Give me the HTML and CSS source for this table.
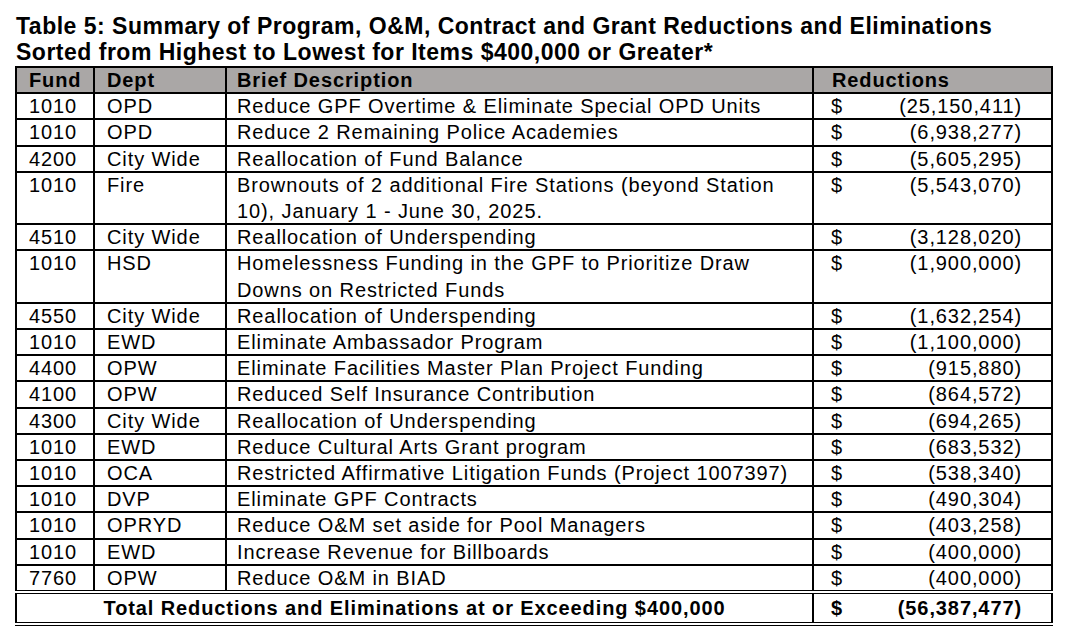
FILE: index.html
```html
<!DOCTYPE html>
<html>
<head>
<meta charset="utf-8">
<link rel="stylesheet" href="styles.css">
</head>
<body>
<div class="page">
  <h1 class="title">Table 5: Summary of Program, O&amp;M, Contract and Grant Reductions and Eliminations<br>Sorted from Highest to Lowest for Items $400,000 or Greater*</h1>
  <table class="summary">
    <colgroup>
      <col class="c-fund"><col class="c-dept"><col class="c-desc"><col class="c-red">
    </colgroup>
    <thead>
      <tr class="head">
        <th>Fund</th><th>Dept</th><th class="desc">Brief Description</th><th class="red-head">Reductions</th>
      </tr>
    </thead>
    <tbody>
      <tr><td>1010</td><td>OPD</td><td class="desc"><span class="txt">Reduce GPF Overtime &amp; Eliminate Special OPD Units</span></td><td class="amt"><div class="money"><span>$</span><span>(25,150,411)</span></div></td></tr>
      <tr><td>1010</td><td>OPD</td><td class="desc"><span class="txt">Reduce 2 Remaining Police Academies</span></td><td class="amt"><div class="money"><span>$</span><span>(6,938,277)</span></div></td></tr>
      <tr><td>4200</td><td>City Wide</td><td class="desc"><span class="txt">Reallocation of Fund Balance</span></td><td class="amt"><div class="money"><span>$</span><span>(5,605,295)</span></div></td></tr>
      <tr><td>1010</td><td>Fire</td><td class="desc"><span class="txt">Brownouts of 2 additional Fire Stations (beyond Station 10), January 1 - June 30, 2025.</span></td><td class="amt"><div class="money"><span>$</span><span>(5,543,070)</span></div></td></tr>
      <tr><td>4510</td><td>City Wide</td><td class="desc"><span class="txt">Reallocation of Underspending</span></td><td class="amt"><div class="money"><span>$</span><span>(3,128,020)</span></div></td></tr>
      <tr><td>1010</td><td>HSD</td><td class="desc"><span class="txt">Homelessness Funding in the GPF to Prioritize Draw Downs on Restricted Funds</span></td><td class="amt"><div class="money"><span>$</span><span>(1,900,000)</span></div></td></tr>
      <tr><td>4550</td><td>City Wide</td><td class="desc"><span class="txt">Reallocation of Underspending</span></td><td class="amt"><div class="money"><span>$</span><span>(1,632,254)</span></div></td></tr>
      <tr><td>1010</td><td>EWD</td><td class="desc"><span class="txt">Eliminate Ambassador Program</span></td><td class="amt"><div class="money"><span>$</span><span>(1,100,000)</span></div></td></tr>
      <tr><td>4400</td><td>OPW</td><td class="desc"><span class="txt">Eliminate Facilities Master Plan Project Funding</span></td><td class="amt"><div class="money"><span>$</span><span>(915,880)</span></div></td></tr>
      <tr><td>4100</td><td>OPW</td><td class="desc"><span class="txt">Reduced Self Insurance Contribution</span></td><td class="amt"><div class="money"><span>$</span><span>(864,572)</span></div></td></tr>
      <tr><td>4300</td><td>City Wide</td><td class="desc"><span class="txt">Reallocation of Underspending</span></td><td class="amt"><div class="money"><span>$</span><span>(694,265)</span></div></td></tr>
      <tr><td>1010</td><td>EWD</td><td class="desc"><span class="txt">Reduce Cultural Arts Grant program</span></td><td class="amt"><div class="money"><span>$</span><span>(683,532)</span></div></td></tr>
      <tr><td>1010</td><td>OCA</td><td class="desc"><span class="txt">Restricted Affirmative Litigation Funds (Project 1007397)</span></td><td class="amt"><div class="money"><span>$</span><span>(538,340)</span></div></td></tr>
      <tr><td>1010</td><td>DVP</td><td class="desc"><span class="txt">Eliminate GPF Contracts</span></td><td class="amt"><div class="money"><span>$</span><span>(490,304)</span></div></td></tr>
      <tr><td>1010</td><td>OPRYD</td><td class="desc"><span class="txt">Reduce O&amp;M set aside for Pool Managers</span></td><td class="amt"><div class="money"><span>$</span><span>(403,258)</span></div></td></tr>
      <tr><td>1010</td><td>EWD</td><td class="desc"><span class="txt">Increase Revenue for Billboards</span></td><td class="amt"><div class="money"><span>$</span><span>(400,000)</span></div></td></tr>
      <tr><td>7760</td><td>OPW</td><td class="desc"><span class="txt">Reduce O&amp;M in BIAD</span></td><td class="amt"><div class="money"><span>$</span><span>(400,000)</span></div></td></tr>
    </tbody>
    <tfoot>
      <tr class="total">
        <td colspan="3" class="total-label">Total Reductions and Eliminations at or Exceeding $400,000</td>
        <td class="amt"><div class="money"><span>$</span><span>(56,387,477)</span></div></td>
      </tr>
    </tfoot>
  </table>
</div>
</body>
</html>
```

FILE: styles.css
```css
html, body {
  margin: 0;
  padding: 0;
  background: #ffffff;
}

body {
  font-family: "Liberation Sans", Arial, sans-serif;
  color: #000000;
}

.page {
  padding: 13px 0 0 15px;
}

.title {
  margin: 0 0 1px 1px;
  font-size: 23px;
  line-height: 26px;
  letter-spacing: 0.5px;
  font-weight: bold;
}

.summary {
  border-collapse: collapse;
  table-layout: fixed;
  width: 1036px;
  font-size: 20px;
  line-height: 23.2px;
  letter-spacing: 0.9px;
}

.c-fund { width: 78px; }
.c-dept { width: 132px; }
.c-desc { width: 587px; }
.c-red { width: 239px; }

.summary th,
.summary td {
  border: 2px solid #000000;
  padding: 1px 4px 0 12px;
  text-align: left;
  vertical-align: top;
}

.summary .desc {
  padding-left: 10px;
  padding-right: 20px;
}

.summary td.desc {
  padding-top: 0;
}

.txt {
  display: block;
  line-height: 26.2px;
  margin: -1px 0;
}

.head th {
  background: #aaa7a6;
  font-weight: bold;
}

.summary th.red-head {
  padding-left: 18px;
}

.summary td.amt {
  padding-left: 17px;
  padding-right: 29px;
}

.money {
  display: flex;
  justify-content: space-between;
}

.total td {
  border-top: 4px double #000000;
  border-bottom: 4px double #000000;
  font-weight: bold;
  height: 25px;
  padding-top: 3px;
}

.summary td.total-label {
  text-align: center;
  padding-left: 0;
  padding-right: 0;
}
```
